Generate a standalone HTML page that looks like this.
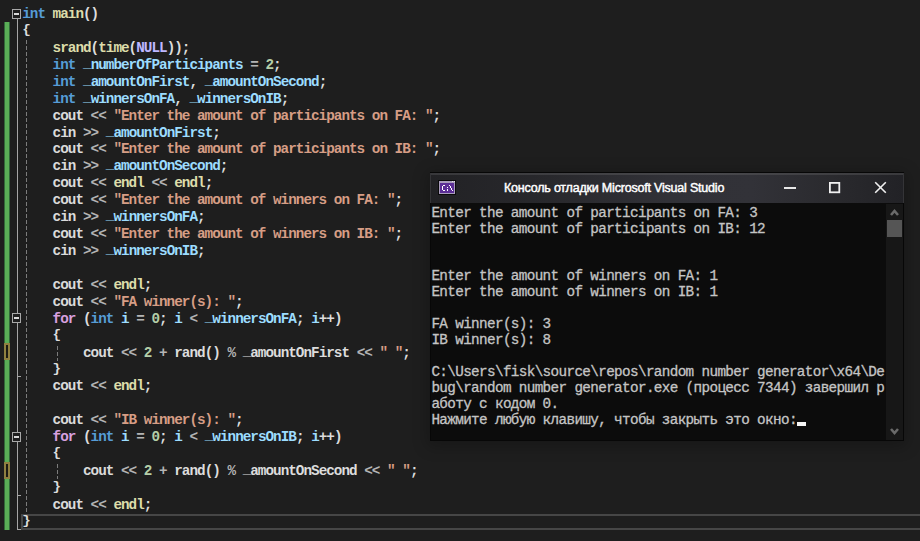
<!DOCTYPE html><html><head><meta charset="utf-8"><style>
*{margin:0;padding:0;box-sizing:border-box}
html,body{width:920px;height:541px;overflow:hidden;background:#1e1e1e}
body{position:relative;font-family:"Liberation Mono",monospace}
.ln{position:absolute;white-space:pre;color:#dcdcdc;font-size:14.30px;letter-spacing:-0.980px;height:17px;line-height:17px;font-weight:bold;}
.k{color:#569cd6}.c{color:#d8a0df}.f{color:#dcdcaa}.v{color:#9cdcfe}.g{color:#dadada}.m{color:#beb7ff}.s{color:#d69d85}.n{color:#b5cea8}.o{color:#b4b4b4}.u{position:relative;top:-2px}.b{display:inline-block;transform:translateY(-2px) scaleY(0.88)}
.abs{position:absolute}
.cl{position:absolute;white-space:pre;color:#c4c4c4;-webkit-text-stroke:0.3px #c4c4c4;font-size:14.30px;letter-spacing:-0.635px;height:16px;line-height:16px}

</style></head><body>
<div class="abs" style="left:21px;top:514px;width:905px;height:16px;border:2px solid #464646"></div>
<div class="abs" style="left:4px;top:22px;width:6px;height:508px;background:#5aae57;border-left:1px solid #33683a;border-right:1px solid #33683a"></div>
<div class="abs" style="left:4px;top:343px;width:6px;height:17px;background:#1c1b14;border:2px solid #8f8040"></div>
<div class="abs" style="left:4px;top:462px;width:6px;height:17px;background:#1c1b14;border:2px solid #8f8040"></div>
<div class="abs" style="left:17px;top:18px;width:1px;height:512px;background:#a5a5a5"></div>
<div class="abs" style="left:17px;top:376px;width:4px;height:1px;background:#a5a5a5"></div>
<div class="abs" style="left:17px;top:495px;width:4px;height:1px;background:#a5a5a5"></div>
<div class="abs" style="left:17px;top:529px;width:4px;height:1px;background:#a5a5a5"></div>
<div class="abs" style="left:12px;top:9px;width:9px;height:10px;background:#1e1e1e;border:1px solid #a8a8a8"></div>
<div class="abs" style="left:14px;top:13px;width:5px;height:2px;background:#d8d8d8"></div>
<div class="abs" style="left:12px;top:313px;width:9px;height:10px;background:#1e1e1e;border:1px solid #a8a8a8"></div>
<div class="abs" style="left:14px;top:317px;width:5px;height:2px;background:#d8d8d8"></div>
<div class="abs" style="left:12px;top:432px;width:9px;height:10px;background:#1e1e1e;border:1px solid #a8a8a8"></div>
<div class="abs" style="left:14px;top:436px;width:5px;height:2px;background:#d8d8d8"></div>
<div class="abs" style="left:26px;top:40px;width:1px;height:473px;background:repeating-linear-gradient(#7c7c7c 0 4px,transparent 4px 6px)"></div>
<div class="abs" style="left:57px;top:346px;width:1px;height:15px;background:repeating-linear-gradient(#7c7c7c 0 4px,transparent 4px 6px)"></div>
<div class="abs" style="left:57px;top:464px;width:1px;height:15px;background:repeating-linear-gradient(#7c7c7c 0 4px,transparent 4px 6px)"></div>
<div class="ln" style="left:22.20px;top:6.00px"><span class="k">int</span> <span class="f">main</span>()</div>
<div class="ln" style="left:22.20px;top:22.93px"><span class="b">{</span></div>
<div class="ln" style="left:22.20px;top:39.86px">    <span class="f">srand</span>(<span class="f">time</span>(<span class="m">NULL</span>));</div>
<div class="ln" style="left:22.20px;top:56.79px">    <span class="k">int</span> <span class="v"><span class="u">_</span>numberOfParticipants</span> <span class="o">=</span> <span class="n">2</span>;</div>
<div class="ln" style="left:22.20px;top:73.72px">    <span class="k">int</span> <span class="v"><span class="u">_</span>amountOnFirst</span>, <span class="v"><span class="u">_</span>amountOnSecond</span>;</div>
<div class="ln" style="left:22.20px;top:90.65px">    <span class="k">int</span> <span class="v"><span class="u">_</span>winnersOnFA</span>, <span class="v"><span class="u">_</span>winnersOnIB</span>;</div>
<div class="ln" style="left:22.20px;top:107.58px">    <span class="g">cout</span> <span class="o">&lt;&lt;</span> <span class="s">"Enter the amount of participants on FA: "</span>;</div>
<div class="ln" style="left:22.20px;top:124.51px">    <span class="g">cin</span> <span class="o">&gt;&gt;</span> <span class="v"><span class="u">_</span>amountOnFirst</span>;</div>
<div class="ln" style="left:22.20px;top:141.44px">    <span class="g">cout</span> <span class="o">&lt;&lt;</span> <span class="s">"Enter the amount of participants on IB: "</span>;</div>
<div class="ln" style="left:22.20px;top:158.37px">    <span class="g">cin</span> <span class="o">&gt;&gt;</span> <span class="v"><span class="u">_</span>amountOnSecond</span>;</div>
<div class="ln" style="left:22.20px;top:175.30px">    <span class="g">cout</span> <span class="o">&lt;&lt;</span> <span class="f">endl</span> <span class="o">&lt;&lt;</span> <span class="f">endl</span>;</div>
<div class="ln" style="left:22.20px;top:192.23px">    <span class="g">cout</span> <span class="o">&lt;&lt;</span> <span class="s">"Enter the amount of winners on FA: "</span>;</div>
<div class="ln" style="left:22.20px;top:209.16px">    <span class="g">cin</span> <span class="o">&gt;&gt;</span> <span class="v"><span class="u">_</span>winnersOnFA</span>;</div>
<div class="ln" style="left:22.20px;top:226.09px">    <span class="g">cout</span> <span class="o">&lt;&lt;</span> <span class="s">"Enter the amount of winners on IB: "</span>;</div>
<div class="ln" style="left:22.20px;top:243.02px">    <span class="g">cin</span> <span class="o">&gt;&gt;</span> <span class="v"><span class="u">_</span>winnersOnIB</span>;</div>
<div class="ln" style="left:22.20px;top:276.88px">    <span class="g">cout</span> <span class="o">&lt;&lt;</span> <span class="f">endl</span>;</div>
<div class="ln" style="left:22.20px;top:293.81px">    <span class="g">cout</span> <span class="o">&lt;&lt;</span> <span class="s">"FA winner(s): "</span>;</div>
<div class="ln" style="left:22.20px;top:310.74px">    <span class="c">for</span> (<span class="k">int</span> <span class="v">i</span> <span class="o">=</span> <span class="n">0</span>; <span class="v">i</span> <span class="o">&lt;</span> <span class="v"><span class="u">_</span>winnersOnFA</span>; <span class="v">i</span>++)</div>
<div class="ln" style="left:22.20px;top:327.67px">    <span class="b">{</span></div>
<div class="ln" style="left:22.20px;top:344.60px">        <span class="g">cout</span> <span class="o">&lt;&lt;</span> <span class="n">2</span> <span class="o">+</span> rand() <span class="o">%</span> <span class="u">_</span>amountOnFirst <span class="o">&lt;&lt;</span> <span class="s">" "</span>;</div>
<div class="ln" style="left:22.20px;top:361.53px">    <span class="b">}</span></div>
<div class="ln" style="left:22.20px;top:378.46px">    <span class="g">cout</span> <span class="o">&lt;&lt;</span> <span class="f">endl</span>;</div>
<div class="ln" style="left:22.20px;top:412.32px">    <span class="g">cout</span> <span class="o">&lt;&lt;</span> <span class="s">"IB winner(s): "</span>;</div>
<div class="ln" style="left:22.20px;top:429.25px">    <span class="c">for</span> (<span class="k">int</span> <span class="v">i</span> <span class="o">=</span> <span class="n">0</span>; <span class="v">i</span> <span class="o">&lt;</span> <span class="v"><span class="u">_</span>winnersOnIB</span>; <span class="v">i</span>++)</div>
<div class="ln" style="left:22.20px;top:446.18px">    <span class="b">{</span></div>
<div class="ln" style="left:22.20px;top:463.11px">        <span class="g">cout</span> <span class="o">&lt;&lt;</span> <span class="n">2</span> <span class="o">+</span> rand() <span class="o">%</span> <span class="u">_</span>amountOnSecond <span class="o">&lt;&lt;</span> <span class="s">" "</span>;</div>
<div class="ln" style="left:22.20px;top:480.04px">    <span class="b">}</span></div>
<div class="ln" style="left:22.20px;top:496.97px">    <span class="g">cout</span> <span class="o">&lt;&lt;</span> <span class="f">endl</span>;</div>
<div class="ln" style="left:22.20px;top:513.90px"><span class="b">}</span></div>
<div class="abs" style="left:430px;top:172px;width:474px;height:269px;background:#0c0c0c;border:1px solid #070707;box-shadow:0 3px 14px 3px rgba(0,0,0,0.22)"></div>
<div class="abs" style="left:430px;top:173px;width:474px;height:30px;border-left:1px solid #343437;border-right:1px solid #343437;background:linear-gradient(90deg,#222225 0%,#28282c 25%,#313137 50%,#323238 68%,#2a2a2e 85%,#222226 100%)"></div>
<div class="abs" style="left:431px;top:173px;width:472px;height:2px;background:linear-gradient(90deg,#38383b,#48484c 60%,#3a3a3d)"></div>
<svg class="abs" style="left:438px;top:180px" width="18" height="15" shape-rendering="crispEdges"><rect x="0" y="0" width="18" height="15" fill="#0a0a0a"/><rect x="1" y="1" width="16" height="13" fill="#a99cbc"/><rect x="2" y="3" width="14" height="10" fill="#5c2e96"/><rect x="14" y="1" width="1" height="1" fill="#e0e0e0"/><rect x="16" y="1" width="1" height="1" fill="#e0e0e0"/><path d="M7 5H5V6H4V10H5V11H7V10H5V6H7Z" fill="#fff"/><rect x="9" y="7" width="1" height="1" fill="#fff"/><rect x="9" y="9" width="1" height="2" fill="#fff"/><path d="M11 5H12V6H13V8H14V10H15V11H14V10H13V8H12V6H11Z" fill="#fff"/></svg>
<div class="abs" style="left:504px;top:180px;font-size:12.5px;letter-spacing:-0.2px;font-family:'Liberation Sans',sans-serif;color:#ffffff;-webkit-text-stroke:0.45px #ffffff;line-height:17px;white-space:pre">Консоль отладки Microsoft Visual Studio</div>
<div class="abs" style="left:784px;top:187px;width:12px;height:2px;background:#e8e8e8"></div>
<svg class="abs" style="left:829px;top:182px" width="12" height="12"><rect x="0.9" y="0.9" width="9.4" height="9.4" fill="none" stroke="#f0f0f0" stroke-width="1.8"/></svg>
<svg class="abs" style="left:874px;top:181px" width="13" height="13"><path d="M1.2 1.2L11.8 11.8M11.8 1.2L1.2 11.8" stroke="#f0f0f0" stroke-width="1.6"/></svg>
<div class="abs" style="left:886px;top:204px;width:17px;height:236px;background:#171717"></div>
<svg class="abs" style="left:888px;top:206px" width="12" height="12"><path d="M3 9L6.5 5L10 9" stroke="#6a6a6a" stroke-width="2.6" fill="none" stroke-linejoin="miter"/></svg>
<div class="abs" style="left:887px;top:220px;width:15px;height:17px;background:#555555"></div>
<svg class="abs" style="left:888px;top:426px" width="12" height="12"><path d="M3 3L6.5 7L10 3" stroke="#6a6a6a" stroke-width="2.6" fill="none" stroke-linejoin="miter"/></svg>
<div class="cl" style="left:431.40px;top:204.70px">Enter the amount of participants on FA: 3</div>
<div class="cl" style="left:431.40px;top:220.64px">Enter the amount of participants on IB: 12</div>
<div class="cl" style="left:431.40px;top:268.46px">Enter the amount of winners on FA: 1</div>
<div class="cl" style="left:431.40px;top:284.40px">Enter the amount of winners on IB: 1</div>
<div class="cl" style="left:431.40px;top:316.28px">FA winner(s): 3</div>
<div class="cl" style="left:431.40px;top:332.22px">IB winner(s): 8</div>
<div class="cl" style="left:431.40px;top:364.10px">C:\Users\fisk\source\repos\random number generator\x64\De</div>
<div class="cl" style="left:431.40px;top:380.04px">bug\random number generator.exe (процесс 7344) завершил р</div>
<div class="cl" style="left:431.40px;top:395.98px">аботу с кодом 0.</div>
<div class="cl" style="left:431.40px;top:411.92px">Нажмите любую клавишу, чтобы закрыть это окно:</div>
<div class="abs" style="left:797.00px;top:422px;width:9px;height:4px;background:#f4f4f4"></div>
</body></html>
